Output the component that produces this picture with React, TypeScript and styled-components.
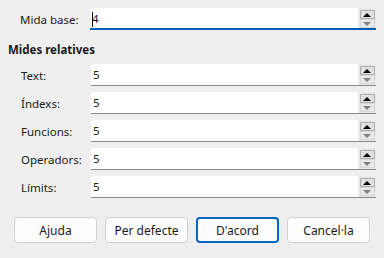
import React from 'react';
import styled, { createGlobalStyle } from 'styled-components';

const GlobalStyle = createGlobalStyle`
	html, body {
		margin: 0;
		padding: 0;
		background: #efefef;
	}
	body {
		font-family: 'Noto Sans', 'Open Sans', sans-serif;
		font-size: 11.5px;
		color: #1a1a1a;
	}
`;

const rows = ['Text', 'Índexs', 'Funcions', 'Operadors', 'Límits'];

const SpinBox = ({ value, focused }: { value: string; focused?: boolean }) => (
	<Field focused={focused}>
		<Input>
			{focused && <Caret />}
			{value}
		</Input>
		<Spin>
			<SpinButton active>
				<Arrow up />
			</SpinButton>
			<SpinButton>
				<Arrow />
			</SpinButton>
		</Spin>
	</Field>
);

export default function App() {
	return (
		<Dialog>
			<GlobalStyle />
			<TopRow>
				<Label>Mida base:</Label>
				<SpinBox value='4' focused />
			</TopRow>
			<Heading>Mides relatives</Heading>
			<Rows>
				{rows.map(r => (
					<Row key={r}>
						<Label>{r}:</Label>
						<SpinBox value='5' />
					</Row>
				))}
			</Rows>
			<Buttons>
				<Button>Ajuda</Button>
				<Button>Per defecte</Button>
				<Button primary>D'acord</Button>
				<Button>Cancel·la</Button>
			</Buttons>
		</Dialog>
	);
}

const Dialog = styled.div`
	width: 384px;
	height: 258px;
	box-sizing: border-box;
	padding-top: 8px;
	display: flex;
	flex-direction: column;
`;

const Row = styled.div`
	display: flex;
	align-items: center;
	height: 22px;
	padding-left: 21px;
	padding-right: 8px;
`;

const TopRow = styled(Row)`
	padding-left: 20px;
`;

const Rows = styled.div`
	display: flex;
	flex-direction: column;
	gap: 6px;
	margin-top: 6px;
`;

const Label = styled.span`
	width: 70px;
	flex-shrink: 0;
	white-space: nowrap;
`;

const Heading = styled.div`
	font-weight: 700;
	padding-left: 8px;
	margin-top: 12px;
	height: 16px;
	line-height: 16px;
`;

const Field = styled.div<{ focused?: boolean }>`
	flex: 1;
	height: 22px;
	box-sizing: border-box;
	display: flex;
	border-bottom: ${p => (p.focused ? '2px solid #005fb8' : '1px solid #8a8a8a')};
`;

const Input = styled.div`
	flex: 1;
	background: #fff;
	display: flex;
	align-items: center;
	padding-left: 2px;
	position: relative;
`;

const Caret = styled.span`
	position: absolute;
	left: 2px;
	top: 4px;
	width: 1px;
	height: 15px;
	background: #000;
`;

const Spin = styled.div`
	width: 18px;
	background: #e9e9e9;
	display: flex;
	flex-direction: column;
	align-items: center;
	padding-top: 2px;
	box-sizing: border-box;
`;

const SpinButton = styled.div<{ active?: boolean }>`
	width: 15px;
	height: 9px;
	box-sizing: border-box;
	border: 1px solid ${p => (p.active ? '#adadad' : '#d8d8d8')};
	background: ${p => (p.active ? '#e1e1e1' : '#e8e8e8')};
	display: flex;
	align-items: center;
	justify-content: center;
`;

const Arrow = styled.span<{ up?: boolean }>`
	width: 0;
	height: 0;
	border-left: 4px solid transparent;
	border-right: 4px solid transparent;
	${p =>
		p.up
			? 'border-bottom: 4px solid #000;'
			: 'border-top: 4px solid #808080;'}
`;

const Buttons = styled.div`
	display: flex;
	gap: 8px;
	padding-left: 14px;
	margin-top: auto;
	margin-bottom: 15px;
`;

const Button = styled.button<{ primary?: boolean }>`
	width: 83px;
	height: 26px;
	box-sizing: border-box;
	font-family: inherit;
	font-size: 12px;
	color: #1a1a1a;
	background: #fdfdfd;
	border-radius: 4px;
	border: ${p => (p.primary ? '2px solid #0067c0' : '1px solid #d0d0d0')};
	padding: 0;
`;
